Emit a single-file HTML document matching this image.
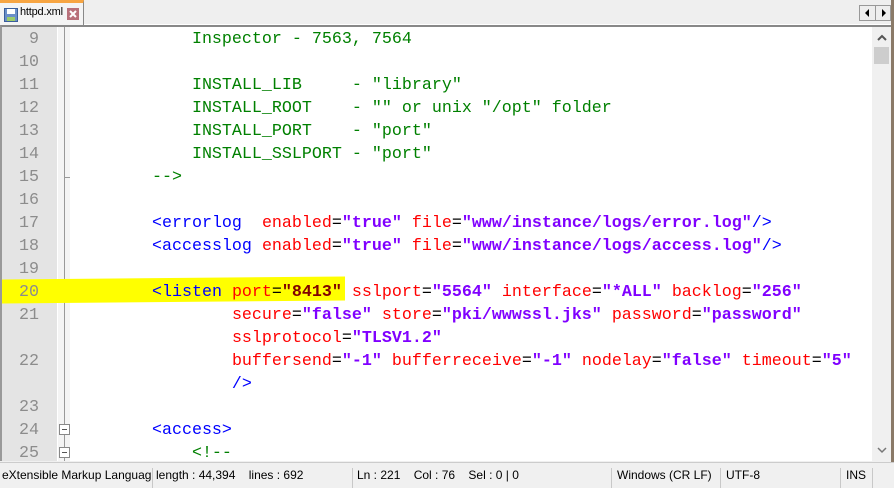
<!DOCTYPE html>
<html><head><meta charset="utf-8"><style>
*{margin:0;padding:0;box-sizing:border-box}
body{width:894px;height:486px;overflow:hidden;background:#f0f0f0;font-family:"Liberation Sans",sans-serif;position:relative}
.tabbar{position:absolute;left:0;top:0;width:894px;height:25px;background:#efefef;border-bottom:1px solid #fff}
.tab{position:absolute;left:0;top:0;width:84px;height:25px;background:#f4f4f4;border-right:1px solid #888;border-top:3px solid #f7a542}
.tab span{position:absolute;left:20px;top:3px;font-size:11px;letter-spacing:-0.2px;color:#000}
.ed{position:absolute;left:0;top:25px;width:891px;height:436px;background:#fff;border-top:2px solid #888;border-left:2px solid #999;overflow:hidden}
.gut{position:absolute;left:0;top:0;width:55px;height:100%;background:#e4e4e4}
.fold{position:absolute;left:55px;top:0;width:13px;height:100%;background:#f4f4f4;border-left:1px solid #fff}
.fl{position:absolute;left:62px;top:0;width:1px;height:100%;background:#999}
.ln{position:absolute;left:0;width:37px;text-align:right;font:16.67px "Liberation Mono",monospace;color:#8c8c8c;line-height:23px}
.c{position:absolute;left:70px;font:16.67px "Liberation Mono",monospace;line-height:23px;white-space:pre}
.g{color:#008000}.b{color:#0000ff}.r{color:#ff0000}.k{color:#000}.v{color:#8000ff;font-weight:bold}.d{color:#800000;font-weight:bold}
.hl{position:absolute;left:0;top:251px;width:343px;height:24px;background:#ffff00;transform:skewY(-0.5deg)}
.box{position:absolute;left:57px;width:11px;height:11px;border:1px solid #888;background:#fff}
.box:after{content:"";position:absolute;left:2px;top:4px;width:5px;height:1px;background:#555}
.sb{position:absolute;left:870px;top:0;width:19px;height:100%;background:#f0f0f0}
.status{position:absolute;left:0;top:462px;width:894px;height:24px;background:#f0f0f0;border-top:1px solid #ccc;font-size:12px}
.status div{position:absolute;top:5px;white-space:pre;overflow:hidden}
.sep{position:absolute;top:2px;width:1px;height:20px;background:#c8c8c8}
</style></head><body>
<div class="tabbar">
 <div class="tab">
  <svg style="position:absolute;left:4px;top:5px" width="14" height="14"><rect x="0.5" y="0.5" width="13" height="13" fill="#6a8fc8" stroke="#3a5d9a"/><rect x="3" y="1" width="8" height="5" fill="#fff"/><rect x="3" y="9" width="8" height="4" fill="#9ccc6a"/></svg>
  <span>httpd.xml</span>
  <svg style="position:absolute;left:67px;top:5px" width="12" height="12"><rect width="12" height="12" fill="#b8707a"/><path d="M3 3L9 9M9 3L3 9" stroke="#fff" stroke-width="2"/></svg>
 </div>
 <div style="position:absolute;left:859px;top:5px;width:32px;height:16px;border:1px solid #999;background:#eee">
  <div style="position:absolute;left:15px;top:0;width:1px;height:14px;background:#999"></div>
  <svg style="position:absolute;left:4px;top:3px" width="8" height="8"><path d="M5 0L1 4L5 8Z" fill="#000"/></svg>
  <svg style="position:absolute;left:20px;top:3px" width="8" height="8"><path d="M2 0L6 4L2 8Z" fill="#000"/></svg>
 </div>
</div>
<div class="ed">
 <div class="gut"></div><div class="fold"></div><div class="fl"></div>
 <div class="hl"></div>
 <div style="position:absolute;left:62px;top:150px;width:6px;height:1px;background:#999"></div>
 <div class="box" style="top:397px"></div><div class="box" style="top:420px"></div>
 <div class="ln" style="top:1px">9</div>
 <div class="ln" style="top:24px">10</div>
 <div class="ln" style="top:47px">11</div>
 <div class="ln" style="top:70px">12</div>
 <div class="ln" style="top:93px">13</div>
 <div class="ln" style="top:116px">14</div>
 <div class="ln" style="top:139px">15</div>
 <div class="ln" style="top:162px">16</div>
 <div class="ln" style="top:185px">17</div>
 <div class="ln" style="top:208px">18</div>
 <div class="ln" style="top:231px">19</div>
 <div class="ln" style="top:254px">20</div>
 <div class="ln" style="top:277px">21</div>
 <div class="ln" style="top:323px">22</div>
 <div class="ln" style="top:369px">23</div>
 <div class="ln" style="top:392px">24</div>
 <div class="ln" style="top:415px">25</div>
 <div class="c g" style="top:1px">            Inspector - 7563, 7564</div>
 <div class="c g" style="top:47px">            INSTALL_LIB     - "library"</div>
 <div class="c g" style="top:70px">            INSTALL_ROOT    - "" or unix "/opt" folder</div>
 <div class="c g" style="top:93px">            INSTALL_PORT    - "port"</div>
 <div class="c g" style="top:116px">            INSTALL_SSLPORT - "port"</div>
 <div class="c g" style="top:139px">        --&gt;</div>
 <div class="c" style="top:185px">        <span class="b">&lt;errorlog</span>  <span class="r">enabled</span><span class="k">=</span><span class="v">"true"</span> <span class="r">file</span><span class="k">=</span><span class="v">"www/instance/logs/error.log"</span><span class="b">/&gt;</span></div>
 <div class="c" style="top:208px">        <span class="b">&lt;accesslog</span> <span class="r">enabled</span><span class="k">=</span><span class="v">"true"</span> <span class="r">file</span><span class="k">=</span><span class="v">"www/instance/logs/access.log"</span><span class="b">/&gt;</span></div>
 <div class="c" style="top:254px">        <span class="b">&lt;listen</span> <span class="r">port</span><span class="k">=</span><span class="d">"8413"</span> <span class="r">sslport</span><span class="k">=</span><span class="v">"5564"</span> <span class="r">interface</span><span class="k">=</span><span class="v">"*ALL"</span> <span class="r">backlog</span><span class="k">=</span><span class="v">"256"</span></div>
 <div class="c" style="top:277px">                <span class="r">secure</span><span class="k">=</span><span class="v">"false"</span> <span class="r">store</span><span class="k">=</span><span class="v">"pki/wwwssl.jks"</span> <span class="r">password</span><span class="k">=</span><span class="v">"password"</span></div>
 <div class="c" style="top:300px">                <span class="r">sslprotocol</span><span class="k">=</span><span class="v">"TLSV1.2"</span></div>
 <div class="c" style="top:323px">                <span class="r">buffersend</span><span class="k">=</span><span class="v">"-1"</span> <span class="r">bufferreceive</span><span class="k">=</span><span class="v">"-1"</span> <span class="r">nodelay</span><span class="k">=</span><span class="v">"false"</span> <span class="r">timeout</span><span class="k">=</span><span class="v">"5"</span></div>
 <div class="c b" style="top:346px">                /&gt;</div>
 <div class="c b" style="top:392px">        &lt;access&gt;</div>
 <div class="c g" style="top:415px">            &lt;!--</div>
 <div class="sb">
  <svg style="position:absolute;left:5px;top:7px" width="10" height="8"><path d="M1 6L5 2L9 6" stroke="#555" stroke-width="2" fill="none"/></svg>
  <div style="position:absolute;left:2px;top:20px;width:15px;height:17px;background:#cdcdcd"></div>
  <svg style="position:absolute;left:5px;top:419px" width="10" height="8"><path d="M1 2L5 6L9 2" stroke="#777" stroke-width="1.5" fill="none"/></svg>
 </div>
</div>
<div style="position:absolute;left:891px;top:0;width:3px;height:486px;background:#8a7a68"></div>
<div class="status">
 <div style="left:2px;width:150px">eXtensible Markup Language</div>
 <div class="sep" style="left:152px"></div>
 <div style="left:156px">length : 44,394    lines : 692</div>
 <div class="sep" style="left:352px"></div>
 <div style="left:357px">Ln : 221    Col : 76    Sel : 0 | 0</div>
 <div class="sep" style="left:611px"></div>
 <div style="left:617px">Windows (CR LF)</div>
 <div class="sep" style="left:720px"></div>
 <div style="left:726px">UTF-8</div>
 <div class="sep" style="left:840px"></div>
 <div style="left:846px">INS</div>
 <div class="sep" style="left:872px"></div>
</div>
</body></html>
